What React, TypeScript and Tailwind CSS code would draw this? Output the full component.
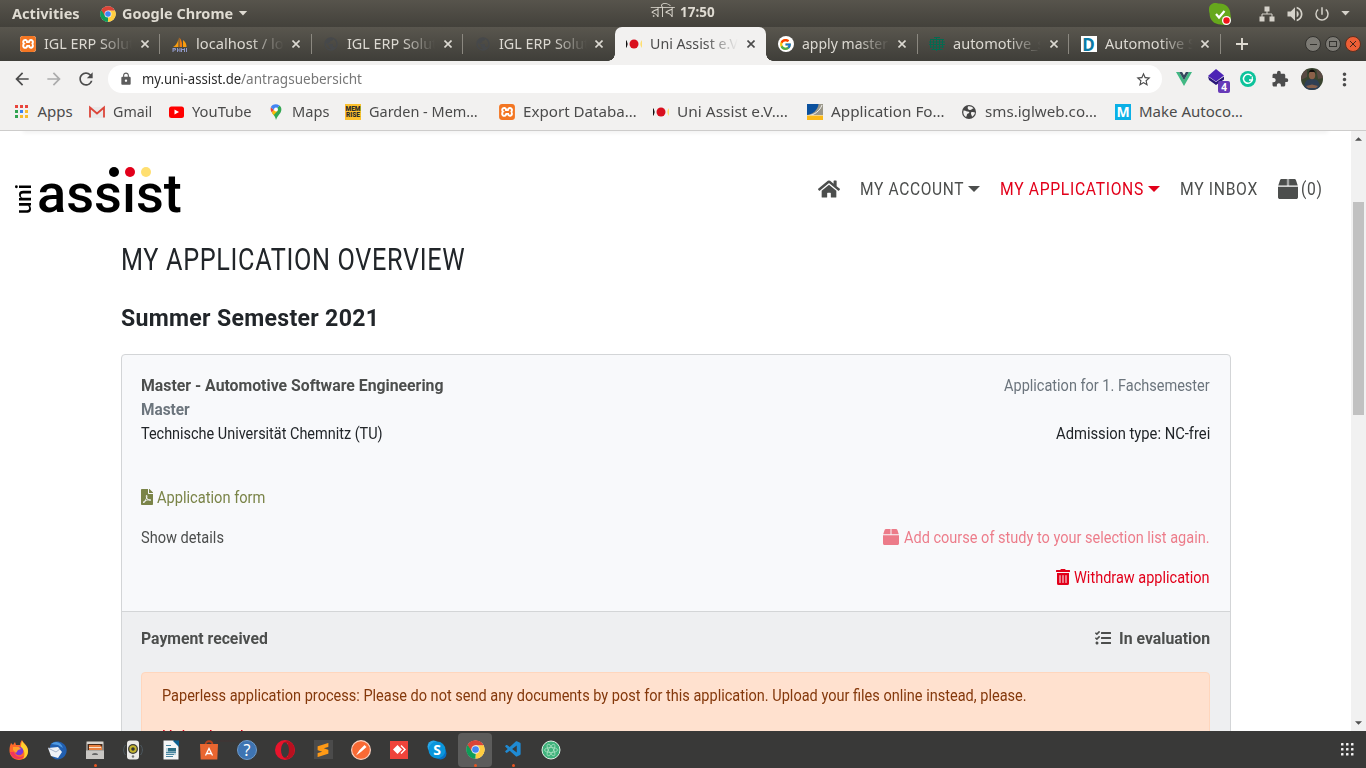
import { useLayoutEffect, useRef, type ReactNode } from "react";
import { FaHome, FaFilePdf, FaTrashAlt, FaTasks } from "react-icons/fa";
import { FcGoogle } from "react-icons/fc";
import { SiXampp, SiAnydesk, SiSublimetext } from "react-icons/si";
import {
  MdArrowBack,
  MdArrowForward,
  MdRefresh,
  MdLock,
  MdStarBorder,
  MdExtension,
  MdMoreVert,
  MdPublic,
  MdVolumeUp,
  MdPowerSettingsNew,
} from "react-icons/md";
import { VscVscode } from "react-icons/vsc";

/* Single line of text condensed or stretched to the width of its box. */
function Fit({ className = "", children }: { className?: string; children: ReactNode }) {
  const outer = useRef<HTMLSpanElement>(null);
  const inner = useRef<HTMLSpanElement>(null);
  useLayoutEffect(() => {
    if (!outer.current || !inner.current) return;
    const ratio = outer.current.clientWidth / inner.current.offsetWidth;
    inner.current.style.transform = `scaleX(${ratio})`;
  }, []);
  return (
    <span ref={outer} className={`block shrink-0 ${className}`}>
      <span ref={inner} className="inline-block origin-left whitespace-nowrap">
        {children}
      </span>
    </span>
  );
}

function ChromeLogo({ className = "" }: { className?: string }) {
  return (
    <svg viewBox="0 0 48 48" className={className}>
      <circle cx="24" cy="24" r="23" fill="#fff" />
      <path d="M24 24 4.1 12.5A23 23 0 0 1 43.9 12.5H24z" fill="#db4437" />
      <path d="M24 24 43.9 12.5A23 23 0 0 1 24 47z" fill="#ffcd40" />
      <path d="M24 24 24 47A23 23 0 0 1 4.1 12.5z" fill="#0f9d58" />
      <path d="M24 13.5h19.9a23 23 0 0 1-10 31.2L33.1 29.2z" fill="#ffcd40" />
      <path d="M4.1 12.5 14.9 29.2 24 34.5 22 47A23 23 0 0 1 4.1 12.5z" fill="#0f9d58" />
      <path d="M4.1 12.5A23 23 0 0 1 43.9 13.5H24L14.9 29.2z" fill="#db4437" />
      <circle cx="24" cy="24" r="10.5" fill="#f1f1f1" />
      <circle cx="24" cy="24" r="8.4" fill="#4285f4" />
    </svg>
  );
}

function ParcelIcon({ className = "" }: { className?: string }) {
  return (
    <svg viewBox="0 0 16 16" className={className} fill="currentColor">
      <path d="M7.100 0v5.200H.2L1.600 1C1.800.4 2.300 0 3 0zM8.900 0H13c.7 0 1.200.4 1.400 1l1.400 4.200H8.900zM0 6.200h16v8.300c0 .8-.7 1.500-1.500 1.500h-13C.7 16 0 15.300 0 14.500z" />
      <path d="M7.100 0h1.800v5.200H7.100z" opacity=".5" />
    </svg>
  );
}

function XamppIcon() {
  return (
    <span className="flex size-4 items-center justify-center overflow-hidden rounded-[3px] bg-white">
      <SiXampp className="size-4 shrink-0 text-[#f37623]" />
    </span>
  );
}

function SailIcon() {
  return (
    <svg viewBox="0 0 16 16" className="size-4">
      <path d="M6.500 0.500C6.700 5 4.500 9 1 11h5.500z" fill="#f89c0e" />
      <path d="M7.500 1.500c2.500 3 3 7 2.500 9.500h-2.500z" fill="#f07c10" />
      <path d="M11 4c2.500 2 3.700 4.500 3.500 7h-3.500z" fill="#f89c0e" />
      <path d="M1 12v4M1 12.500h2.500v1.500h-2.500M5.500 12v4M5.500 14h2M8 12v4M9.500 16v-3.500l1.500 1.500 1.500-1.500V16M14.500 12v4" stroke="#8f98c8" fill="none" />
    </svg>
  );
}

function DimGlobe() {
  return <MdPublic className="size-4 text-[#46484a]" />;
}

function UniIcon() {
  return (
    <svg viewBox="0 0 16 16" className="size-4">
      <path d="M0 4.200q2.500 3.800 0 7.600z" fill="#111" />
      <path d="M0 4q3 4 0 8z" fill="#111" />
      <circle cx="8" cy="8" r="4.500" fill="#d90f1e" />
      <path d="M16 4q-3.500 4 0 8z" fill="#ffdf70" />
    </svg>
  );
}

function GoogleIcon() {
  return (
    <span className="flex size-4 items-center justify-center rounded-full bg-white">
      <FcGoogle className="size-[13px]" />
    </span>
  );
}

function CrestIcon() {
  return (
    <svg viewBox="0 0 16 16" className="size-4" stroke="#046a50" fill="none">
      <path d="M1 3.500h14M0 6h16M0 8.500h16M1 11h14M2.500 13.500h11" strokeWidth="1" />
      <path d="M1.500 3v9M4.500 3v11M7.500 1v14M10.500 3v11M13.500 3v9M5 1.500h6" strokeWidth="1" />
    </svg>
  );
}

function DIcon() {
  return (
    <span className="flex size-4 items-center justify-center bg-white font-['Noto_Sans'] text-[17px] leading-none font-bold text-[#0b7aa5]">
      D
    </span>
  );
}

type TabData = { icon: ReactNode; title: string; width: string; active?: boolean; divider?: boolean };

const tabs: TabData[] = [
  { icon: <XamppIcon />, title: "IGL ERP Solut", width: "w-[90px]", divider: true },
  { icon: <SailIcon />, title: "localhost / lo", width: "w-[88px]", divider: true },
  { icon: <DimGlobe />, title: "IGL ERP Solut", width: "w-[90px]", divider: true },
  { icon: <DimGlobe />, title: "IGL ERP Solut", width: "w-[90px]" },
  { icon: <UniIcon />, title: "Uni Assist e.V", width: "w-[88px]", active: true },
  { icon: <GoogleIcon />, title: "apply master", width: "w-[86px]", divider: true },
  { icon: <CrestIcon />, title: "automotive_s", width: "w-[92px]", divider: true },
  { icon: <DIcon />, title: "Automotive S", width: "w-[91px]", divider: true },
];

function Tab({ icon, title, width, active, divider }: TabData) {
  return (
    <div
      className={`relative flex h-full w-[151.5px] shrink-0 items-center pl-[11.500px] ${
        active ? "rounded-t-[7px] bg-[#f2f1f0] text-[#4b4b4b]" : "text-[#dcd9d2]"
      }`}
    >
      {active && (
        <>
          <span className="absolute bottom-0 -left-[7px] size-[7px] bg-[radial-gradient(circle_at_0_0,transparent_6.500px,#f2f1f0_7px)]" />
          <span className="absolute -right-[7px] bottom-0 size-[7px] bg-[radial-gradient(circle_at_100%_0,transparent_6.500px,#f2f1f0_7px)]" />
        </>
      )}
      {icon}
      <div className="-mt-0.5 ml-2 w-[88px] overflow-hidden [mask-image:linear-gradient(90deg,#000_62%,transparent)]">
        <Fit className={`${width} leading-6`}>{title}</Fit>
      </div>
      <svg viewBox="0 0 8 8" className="ml-[8.500px] size-2" stroke="currentColor" strokeWidth="1.600">
        <path d="M.5.5l7 7M7.500.5l-7 7" />
      </svg>
      {divider && <span className="absolute top-[7px] right-0 h-5 w-px bg-[#8b8880]" />}
    </div>
  );
}

function TopBar() {
  return (
    <div className="grid h-[27px] grid-cols-3 items-center bg-gradient-to-b from-[#57544c] to-[#43413b] text-[15px] text-[#dfdbd2]">
      <div className="flex items-center pl-3 font-bold">
        <Fit className="w-[68px]">Activities</Fit>
        <ChromeLogo className="ml-5 size-4" />
        <Fit className="ml-1.5 w-[111px]">Google Chrome</Fit>
        <svg viewBox="0 0 10 6" className="ml-[5px] h-[5px] w-[10px]">
          <path d="M0 0h10L5 5.500z" fill="#dfdbd2" />
        </svg>
      </div>
      <div className="-mt-1 flex justify-center gap-1.5 font-bold">
        <Fit className="w-[23px] font-medium">রবি</Fit>
        <Fit className="w-[35px]">17:50</Fit>
      </div>
      <div className="flex items-center justify-end pr-4 text-[#d5d2ca]">
        <svg viewBox="0 0 22 22" className="mr-7 size-[22px]">
          <path d="M6 0c2 0 3 .5 4 .6C17 .5 21.500 5 21.400 11.500c.3 1 .6 2.500.6 4 0 4-3 6.500-6 6.500-2 0-3-.5-4-.6C5 21.500.6 17 .6 10.500 0 9 0 7 0 6 0 2.500 3 0 6 0z" fill="#66a81c" />
          <path d="M7 11l3 3.500L15.500 8" fill="none" stroke="#fff" strokeWidth="2.200" />
          <circle cx="17.500" cy="17.500" r="4.500" fill="#fff" />
          <circle cx="17.500" cy="17.500" r="3.200" fill="#f0151a" />
        </svg>
        <svg viewBox="0 0 16 16" className="mr-[10px] size-4" fill="currentColor">
          <path d="M5.500.5h5v5h-5zM.5 10.500h5v5h-5zM10.500 10.500h5v5h-5z" />
          <path d="M8 5v3M3 11V8h10v3" fill="none" stroke="currentColor" />
        </svg>
        <MdVolumeUp className="mr-2 size-5" />
        <MdPowerSettingsNew className="mr-[10px] size-[18px]" />
        <svg viewBox="0 0 10 6" className="h-[5px] w-[9px]">
          <path d="M0 0h10L5 5.500z" fill="currentColor" />
        </svg>
      </div>
    </div>
  );
}

function TabStrip() {
  const round = "flex size-4 items-center justify-center rounded-full border";
  return (
    <div className="flex h-[34px] items-center bg-gradient-to-b from-[#59564e] to-[#3f3e39] pl-[8.500px] text-[15px]">
      {tabs.map((t, i) => (
        <Tab key={i} {...t} />
      ))}
      <svg viewBox="0 0 12 12" className="ml-[15.500px] size-3" stroke="#dfdbd2" strokeWidth="1.900">
        <path d="M6 0v12M0 6h12" />
      </svg>
      <div className="ml-auto flex gap-1 pr-[5px]">
        <span className={`${round} border-[#33322e] bg-[#7d7b75]`}>
          <span className="h-px w-[7px] bg-[#33322e]" />
        </span>
        <span className={`${round} border-[#33322e] bg-[#7d7b75]`}>
          <span className="h-[6px] w-2 border border-[#33322e]" />
        </span>
        <span className={`${round} border-[#5b2f20] bg-[#ee5f36]`}>
          <svg viewBox="0 0 6 6" className="size-1.5" stroke="#43261c">
            <path d="M0 0l6 6M6 0L0 6" />
          </svg>
        </span>
      </div>
    </div>
  );
}

function Toolbar() {
  return (
    <div className="flex h-9 items-center bg-[#f2f1f0] pr-[11px] pl-3 text-[#4c4c4c]">
      <MdArrowBack className="size-5" />
      <MdArrowForward className="ml-3 size-5 text-[#acacac]" />
      <MdRefresh className="ml-3 size-5" />
      <div className="ml-3 flex h-7 w-[1054px] items-center rounded-full bg-white pr-2.5 pl-[11px] text-[15px]">
        <MdLock className="size-3.5 text-[#5c5c5c]" />
        <Fit className="-mt-0.5 ml-[9px] w-[99px] text-[#2c2c2c]">my.uni-assist.de</Fit>
        <Fit className="-mt-0.5 w-[121px] text-[#777]">/antragsuebersicht</Fit>
        <MdStarBorder className="ml-auto size-[17px]" />
      </div>
      <svg viewBox="0 0 16 14" className="ml-3.5 h-3.5 w-4">
        <path d="M0 0h3.200L8 8.300 12.800 0H16L8 14z" fill="#41b883" />
        <path d="M3.200 0h2.900L8 3.300 9.900 0h2.900L8 8.300z" fill="#34495e" />
      </svg>
      <div className="relative ml-4 size-[22px]">
        <svg viewBox="0 0 18 18" className="size-[18px]">
          <path d="M0 8.500l8 5.500 8-5.500v3L8 17 1 12z" fill="#291678" />
          <path d="M8 1l8 6.500L8 13.500 0 8z" fill="#4c24b5" />
        </svg>
        <span className="absolute right-0 -bottom-[3px] flex h-3 w-3 items-center justify-center rounded-[2px] bg-[#673ab7] text-[10px] leading-none font-bold text-white">
          4
        </span>
      </div>
      <svg viewBox="0 0 16 16" className="ml-2.5 size-4">
        <circle cx="8" cy="8" r="8" fill="#0dc39b" />
        <path d="M11.500 5A4.500 4.500 0 1 0 12.300 9H9" fill="none" stroke="#fff" strokeWidth="1.500" />
        <path d="M12.300 5.500V9" stroke="#fff" strokeWidth="1.200" />
      </svg>
      <MdExtension className="ml-[15px] size-[18px]" />
      <svg viewBox="0 0 22 22" className="ml-3 size-[22px] rounded-full">
        <rect width="22" height="22" fill="#39442f" />
        <path d="M0 3l6-3v9L0 12zM15 0h7v10l-5 1z" fill="#594a43" />
        <path d="M3 22c0-8 2-11 8-11s8 3 8 11z" fill="#2f3f54" />
        <ellipse cx="11" cy="7" rx="3.200" ry="4.300" fill="#8b6049" />
        <path d="M7.500 6c0-6 7-6 7 0l-1-2h-5z" fill="#120e0d" />
        <path d="M5 18l6-1.500 6 1.500-2 2H7z" fill="#86604c" />
      </svg>
      <MdMoreVert className="ml-[11px] size-[21px]" />
    </div>
  );
}

function AppsIcon() {
  const colors = ["#e8453c", "#e8453c", "#e8453c", "#31a350", "#3a80f0", "#f9bb2d", "#31a350", "#f9bb2d", "#f9bb2d"];
  return (
    <svg viewBox="0 0 13 13" className="mx-[1.500px] size-[13px]">
      {colors.map((c, i) => (
        <rect key={i} x={(i % 3) * 5} y={Math.floor(i / 3) * 5} width="3" height="3" fill={c} />
      ))}
    </svg>
  );
}

const bookmarks: { icon: ReactNode; label: string; cell: string; width: string }[] = [
  { icon: <AppsIcon />, label: "Apps", cell: "w-[75.500px]", width: "w-[35px]" },
  {
    icon: (
      <svg viewBox="0 0 16 16" className="size-4">
        <path d="M1 3h14v11H1z" fill="#e9e9e9" />
        <path d="M1 13.500V3.500l7 6 7-6v10" fill="none" stroke="#dc4539" strokeWidth="1.800" />
      </svg>
    ),
    label: "Gmail",
    cell: "w-[79px]",
    width: "w-[39px]",
  },
  {
    icon: (
      <svg viewBox="0 0 16 16" className="size-4">
        <rect x="1" y="2.500" width="15" height="11.500" rx="2.500" fill="#f00" />
        <path d="M6.500 5.500v5L11 8z" fill="#fff" />
      </svg>
    ),
    label: "YouTube",
    cell: "w-[100px]",
    width: "w-[60px]",
  },
  {
    icon: (
      <svg viewBox="0 0 16 16" className="size-4">
        <path d="M8 16c-.5-3-2-4.500-3.800-7L11.500 1.500C14.500 4 13.500 8 11.500 10 9.500 12.500 9 13.500 8 16z" fill="#34a853" />
        <path d="M2.800 3.200L6 5.900 3.900 8.500C2.500 7 2.400 5 2.800 3.200z" fill="#ea4335" />
        <path d="M3.900 8.500L6 6l3.500 1-4 4.200z" fill="#fbbc04" />
        <path d="M2.800 3.200C4 .5 8-1 11.500 1.500L8 5.500 6 6z" fill="#4285f4" />
        <circle cx="8" cy="5.500" r="2" fill="#fff" />
      </svg>
    ),
    label: "Maps",
    cell: "w-[77px]",
    width: "w-[37px]",
  },
  {
    icon: (
      <span className="flex size-4 flex-col items-center justify-center bg-[#fcc12e] font-['Roboto'] text-[6.500px] leading-[6px] font-black text-[#2b2b2b]">
        <span>MEM</span>
        <span>RISE</span>
      </span>
    ),
    label: "Garden - Mem…",
    cell: "w-[154px]",
    width: "w-[109px]",
  },
  { icon: <XamppIcon />, label: "Export Databa…", cell: "w-[154px]", width: "w-[114px]" },
  { icon: <UniIcon />, label: "Uni Assist e.V.…", cell: "w-[154px]", width: "w-[111px]" },
  {
    icon: (
      <svg viewBox="0 0 16 16" className="size-4">
        <path d="M0 0h16v11H0z" fill="#9a9789" />
        <path d="M0 0h11.500C11 6 6 10 0 11z" fill="#0b519e" />
        <path d="M15 1C13 7 7 11 2 11.500" stroke="#f2f1f0" fill="none" />
        <path d="M0 11.500h16V16H0z" fill="#fbb918" />
      </svg>
    ),
    label: "Application Fo…",
    cell: "w-[154px]",
    width: "w-[114px]",
  },
  {
    icon: (
      <svg viewBox="0 0 16 16" className="size-4">
        <circle cx="8" cy="8" r="7" fill="#454545" />
        <path d="M2.500 6.500c2-.5 2.500 1 4.500 1 2 .3 1.500 2-.5 2.200-1 .8-.5 2.500-1.500 3.300C3 12 1.800 9.500 2.500 6.500zM7 2.500c2-.5 4.500.5 5.500 2-2 0-1.500 1.500-3.500 1.500S6 4 7 2.500zM10 8.500c1.500-.8 3-.3 4 0-.3 2-1.500 3.500-3 4.300 0-1.500-1.500-2.800-1-4.300z" fill="#f2f1f0" />
      </svg>
    ),
    label: "sms.iglweb.co…",
    cell: "w-[154px]",
    width: "w-[112px]",
  },
  {
    icon: (
      <span className="flex size-4 items-center justify-center bg-[#0bb0e6] font-['Noto_Sans'] text-[14px] leading-none font-bold text-white">
        M
      </span>
    ),
    label: "Make Autoco…",
    cell: "w-[154px]",
    width: "w-[104px]",
  },
];

function BookmarkBar() {
  return (
    <div className="flex h-[34px] items-center border-b border-[#cdcccb] bg-[#f2f1f0] pb-1 pl-[13.500px] text-[15px] text-[#4b4b4b]">
      {bookmarks.map((b) => (
        <div key={b.label} className={`flex shrink-0 items-center gap-2 ${b.cell}`}>
          {b.icon}
          <Fit className={b.width}>{b.label}</Fit>
        </div>
      ))}
    </div>
  );
}

function SiteHeader() {
  return (
    <header className="flex h-[94px] items-start justify-between pr-[28px] pl-4">
      <div className="flex pt-9">
        <div className="flex h-[47px] w-4 items-end">
          <span className="rotate-180 text-[22px] leading-4 font-medium text-black [writing-mode:vertical-rl]">uni</span>
        </div>
        <div className="relative ml-[5px] h-12 w-[145px]">
          <Fit className="w-[145px] text-[53px] leading-[54px] font-medium text-black">assıst</Fit>
          <svg viewBox="0 0 42 10" className="absolute top-0 left-[71.500px] h-[10px] w-[42px]">
            <circle cx="5" cy="5" r="5" fill="#000" />
            <circle cx="21" cy="5" r="5" fill="#e2001a" />
            <circle cx="37" cy="5" r="5" fill="#ffdf70" />
          </svg>
        </div>
      </div>
      <nav className="flex h-[116px] items-center text-[18.500px] tracking-[0.8px] text-[#4c4e4d]">
        <FaHome className="size-[22px]" />
        <Fit className="mt-0.5 ml-5 w-[104px]">MY ACCOUNT</Fit>
        <svg viewBox="0 0 12 6" className="ml-1 h-1.5 w-3" fill="currentColor">
          <path d="M0 0h12L6 6z" />
        </svg>
        <Fit className="mt-0.5 ml-5 w-[144px] text-[#e2001a]">MY APPLICATIONS</Fit>
        <svg viewBox="0 0 12 6" className="ml-1 h-1.5 w-3 text-[#e2001a]" fill="currentColor">
          <path d="M0 0h12L6 6z" />
        </svg>
        <Fit className="mt-0.5 ml-5 w-[78px]">MY INBOX</Fit>
        <ParcelIcon className="ml-5 size-5" />
        <Fit className="mt-0.5 ml-[3px] w-[22px]">(0)</Fit>
      </nav>
    </header>
  );
}

function ApplicationCard() {
  return (
    <section className="mt-5 w-[1110px] rounded-t-[4px] border border-[#d3d5d7] bg-[#f8f9fb] text-base leading-6 text-[#212529]">
      <div className="flex h-[256px] justify-between pr-5 pl-[19px] pt-[19px]">
        <div>
          <Fit className="w-[302px] font-bold text-[#4c4e4d]">Master - Automotive Software Engineering</Fit>
          <Fit className="w-[49px] font-bold text-[#6c757d]">Master</Fit>
          <Fit className="w-[242px]">Technische Universität Chemnitz (TU)</Fit>
          <div className="mt-10 flex items-center text-[#7a8448]">
            <FaFilePdf className="-mt-0.5 mr-1 h-4 w-3" />
            <Fit className="w-[108px]">Application form</Fit>
          </div>
          <Fit className="mt-4 w-[83px] text-[#4c4e4d]">Show details</Fit>
        </div>
        <div className="flex flex-col items-end">
          <Fit className="w-[206px] text-[#6c757d]">Application for 1. Fachsemester</Fit>
          <Fit className="mt-6 w-[154px]">Admission type: NC-frei</Fit>
          <div className="mt-20 flex items-center text-[#e2001a] opacity-50">
            <ParcelIcon className="mr-[5px] mb-0.5 size-4" />
            <Fit className="w-[306px]">Add course of study to your selection list again.</Fit>
          </div>
          <div className="mt-4 flex items-center text-[#e2001a]">
            <FaTrashAlt className="mr-1 mb-0.5 h-4 w-3.5" />
            <Fit className="w-[136px]">Withdraw application</Fit>
          </div>
        </div>
      </div>
      <div className="h-[160px] border-t border-[#d3d5d7] bg-[#eeeff1] pr-5 pl-[19px] pt-[15px]">
        <div className="flex items-center justify-between font-bold text-[#4c4e4d]">
          <Fit className="w-[127px]">Payment received</Fit>
          <div className="flex items-center">
            <FaTasks className="mr-2 mb-0.5 size-4" />
            <Fit className="w-[91px]">In evaluation</Fit>
          </div>
        </div>
        <div className="mt-[21px] h-[120px] rounded-[4px] border border-[#ffd6bd] bg-[#ffe1cf] px-5 pt-[11px] text-[#84380b]">
          <Fit className="w-[865px]">
            Paperless application process: Please do not send any documents by post for this application. Upload your files
            online instead, please.
          </Fit>
          <Fit className="mt-[17px] w-[82px] text-[#e2001a]">Upload and</Fit>
        </div>
      </div>
    </section>
  );
}

function Page() {
  return (
    <div className="flex h-[600px] overflow-hidden bg-white font-['Roboto',sans-serif]">
      <main className="w-[1351px]">
        <div className="mr-6 ml-6 h-0 shadow-[0_0_4px_1px_rgba(0,0,0,0.12)]" />
        <SiteHeader />
        <div className="pl-[120.500px] text-[#212529]">
          <Fit className="-mt-px w-[344px] pt-4 text-[30.500px] leading-10 tracking-[0.8px]">MY APPLICATION OVERVIEW</Fit>
          <Fit className="mt-[24px] w-[258px] text-[23px] leading-[30px] font-bold tracking-[0.3px]">Summer Semester 2021</Fit>
          <ApplicationCard />
        </div>
      </main>
      <div className="flex w-[15px] flex-col items-center bg-[#f1f1f1] pt-1.5 pb-1.5">
        <svg viewBox="0 0 8 4" className="h-1 w-[7px]">
          <path d="M0 4h8L4 0z" fill="#505050" />
        </svg>
        <div className="mt-[61px] h-[213px] w-[11px] bg-[#c1c1c1]" />
        <svg viewBox="0 0 8 4" className="mt-auto h-1 w-[7px]">
          <path d="M0 0h8L4 4z" fill="#505050" />
        </svg>
      </div>
    </div>
  );
}

const dockApps: { name: string; icon: ReactNode; running?: boolean; focused?: boolean }[] = [
  {
    name: "firefox",
    icon: (
      <svg viewBox="0 0 20 20" className="size-5">
        <path d="M1 6l1-3 2 2 2-3 1 3h4c0-2 1-4 2-5 1 3 6 5 6 11 0 5-4 9-9 9s-9.500-4-9.500-9c0-2 0-3 .5-5z" fill="#ff6a2b" />
        <path d="M13 1c2 3 6 5 6 10 0 4-2 7-5 8 3-5 1-9-2-12 0-2 .2-4 1-6z" fill="#ffd12e" />
        <path d="M1 12c1 4 4 7 8 7 3 0 5-1 6-3-5 2-9 0-10-4z" fill="#f0365f" />
        <circle cx="10" cy="11" r="4.300" fill="#7b38d8" />
        <path d="M4 7h6l2 2-3 1-2 3-3-3z" fill="#ffa12b" />
      </svg>
    ),
  },
  {
    name: "thunderbird",
    icon: (
      <svg viewBox="0 0 20 20" className="size-5">
        <path d="M3 6C5-1 18 0 19.500 9c1 6-4 10.500-9 10.500-3 0-5-2-6-4z" fill="#215fb0" />
        <path d="M4 4c5-4 10-2 12 4l-5-3z" fill="#4f9be4" />
        <path d="M1 8l10-1 4 5-4 6-7-2z" fill="#eef1f6" />
        <path d="M1 8l8 4 4-3" stroke="#a8b6cb" fill="none" />
      </svg>
    ),
  },
  {
    name: "files",
    running: true,
    icon: (
      <svg viewBox="0 0 20 20" className="size-5">
        <rect x="1" y="1" width="18" height="18" rx="1.500" fill="#8d8984" />
        <path d="M2 2h16v2H2z" fill="#d8d5d0" />
        <path d="M3 4h14v6H3z" fill="#4a2b1a" />
        <path d="M4 5h11l2 2v3H4z" fill="#e9813f" />
        <path d="M4 7h12v1H4z" fill="#fbe0c9" />
        <path d="M1 10.500h18v8.500H1z" fill="#c8c6c3" />
        <path d="M7 15a3 2 0 0 1 6 0z" fill="#666" />
      </svg>
    ),
  },
  {
    name: "music",
    icon: (
      <svg viewBox="0 0 20 20" className="size-5">
        <path d="M2.500 5C0 8 0 12 2.500 15M17.500 5c2.500 3 2.500 7 0 10" stroke="#4e5a62" fill="none" />
        <rect x="4" y="0.500" width="12" height="19" rx="3" fill="#ecebe8" />
        <circle cx="10" cy="9" r="5" fill="#3e3d38" />
        <circle cx="10" cy="9" r="3.700" fill="#c4b52d" />
        <circle cx="10" cy="9" r="1.800" fill="#333" />
        <circle cx="10" cy="16.500" r="1.200" fill="#777" />
      </svg>
    ),
  },
  {
    name: "writer",
    icon: (
      <svg viewBox="0 0 20 20" className="size-5">
        <path d="M2.500.5h10l5 5v14h-15z" fill="#f4f6f7" />
        <path d="M11.500.5h6.500v6.500z" fill="#0b6091" />
        <path d="M5 8h10v7H5z" fill="#bfd6de" />
        <path d="M7 8h8v3.500H7z" fill="#2c6f86" />
        <path d="M5 5.500h5M5 12.500h10M5 14.500h8M5 16.500h7" stroke="#4986a1" />
      </svg>
    ),
  },
  {
    name: "software",
    icon: (
      <svg viewBox="0 0 20 20" className="size-5">
        <path d="M6.500 5c0-5 7-5 7 0" fill="none" stroke="#b8431c" strokeWidth="1.800" />
        <path d="M1 4h18l-.7 15.500H1.700z" fill="#e96630" />
        <path d="M6.500 15.500L10 8.500l3.500 7M7.500 13.500h5" fill="none" stroke="#fff" strokeWidth="1.300" />
      </svg>
    ),
  },
  {
    name: "help",
    icon: (
      <span className="flex size-5 items-center justify-center rounded-full border border-[#6f9bc9] bg-[#3e74b2] text-base leading-none text-white">
        ?
      </span>
    ),
  },
  {
    name: "opera",
    icon: (
      <svg viewBox="0 0 20 20" className="size-5">
        <circle cx="10" cy="10" r="10" fill="#e8142c" />
        <path d="M13 1a9.500 9.500 0 0 1 0 18c-2 0-4-1-5-2h5V3H8c1-1 3-2 5-2z" fill="#b9101f" />
        <ellipse cx="10" cy="10" rx="4" ry="7.500" fill="#3a3a39" />
      </svg>
    ),
  },
  {
    name: "sublime",
    icon: (
      <span className="flex size-[19px] items-center justify-center bg-[#4b4b4b]">
        <SiSublimetext className="size-3.5 text-[#ff9a16]" />
      </span>
    ),
  },
  {
    name: "postman",
    icon: (
      <svg viewBox="0 0 20 20" className="size-5">
        <circle cx="10" cy="10" r="9.400" fill="#f96a35" stroke="#fbd0bf" strokeWidth="1.200" />
        <path d="M8.500 10l5-5 2 2-5 4.500zM8.500 10l2 1.500L5 15.500z" fill="#fff" />
      </svg>
    ),
  },
  {
    name: "anydesk",
    icon: (
      <span className="flex size-[18px] items-center justify-center bg-[#ef443b]">
        <SiAnydesk className="size-[13px] text-white" />
      </span>
    ),
  },
  {
    name: "skype",
    icon: (
      <span className="relative flex size-5 items-center justify-center">
        <svg viewBox="0 0 20 20" className="absolute inset-0 size-5">
          <circle cx="6.500" cy="6.500" r="6" fill="#28a8ea" />
          <circle cx="13.500" cy="13.500" r="6" fill="#0a6fc2" />
          <circle cx="10" cy="10" r="8.500" fill="#0a96dc" />
        </svg>
        <span className="relative text-sm leading-none font-bold text-white">S</span>
      </span>
    ),
  },
  { name: "chrome", icon: <ChromeLogo className="size-[19px]" />, running: true, focused: true },
  { name: "code", icon: <VscVscode className="size-[19px] text-[#1f8ad2]" />, running: true },
  {
    name: "atom",
    icon: (
      <svg viewBox="0 0 20 20" className="size-5" fill="none" stroke="#a9dfc0">
        <circle cx="10" cy="10" r="9" fill="#3fb27c" stroke="#dff2e6" strokeWidth="1" />
        <g strokeWidth=".8">
          <ellipse cx="10" cy="10" rx="6.500" ry="2.500" />
          <ellipse cx="10" cy="10" rx="6.500" ry="2.500" transform="rotate(60 10 10)" />
          <ellipse cx="10" cy="10" rx="6.500" ry="2.500" transform="rotate(120 10 10)" />
        </g>
      </svg>
    ),
  },
];

function Dock() {
  return (
    <div className="flex h-[37px] items-center bg-[#393938] bg-[radial-gradient(ellipse_at_225px_10px,rgba(90,35,35,0.5),transparent_30px)] pr-3">
      {dockApps.map((app) => (
        <div key={app.name} className="relative flex h-full w-[38px] items-center justify-center">
          {app.focused && <span className="absolute inset-x-[2px] top-[2px] bottom-px rounded-[4px] bg-[#5c5c5b]" />}
          <span className="relative">{app.icon}</span>
          {app.running && <span className="absolute bottom-px left-[17.500px] size-[3px] rounded-full bg-[#e95420]" />}
        </div>
      ))}
      <svg viewBox="0 0 13 13" className="ml-auto size-[13px]" fill="#f2f2f2">
        {[0, 1, 2, 3, 4, 5, 6, 7, 8].map((i) => (
          <rect key={i} x={(i % 3) * 5} y={Math.floor(i / 3) * 5} width="2.500" height="2.500" rx=".6" />
        ))}
      </svg>
    </div>
  );
}

export default function App() {
  return (
    <div className="h-[768px] w-[1366px] overflow-hidden bg-[#393938] font-['Noto_Sans',sans-serif]">
      <TopBar />
      <TabStrip />
      <Toolbar />
      <BookmarkBar />
      <Page />
      <Dock />
    </div>
  );
}
